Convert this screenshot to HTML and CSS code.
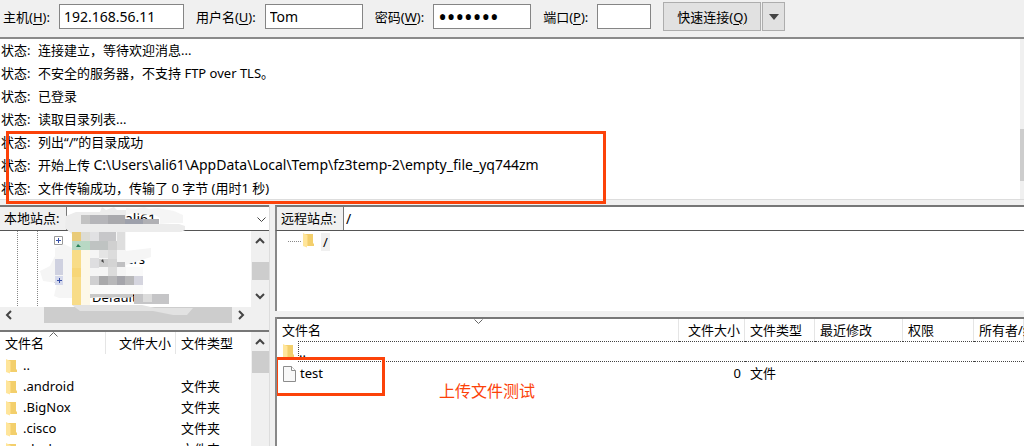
FILE: index.html
```
<!DOCTYPE html>
<html lang="zh-CN">
<head>
	<meta charset="utf-8">
	<title>FileZilla</title>
	<link rel="stylesheet" href="styles.css">
</head>
<body>

<!-- shared icons -->
<svg class="sprite" aria-hidden="true">
	<symbol id="folder" viewBox="0 0 11 15">
		<path d="M2 1h8v9l1 1v2H2z" fill="#f3cf6c"/>
		<path d="M0 0l4 2v12.500L0 13z" fill="#ffe59a"/>
		<path d="M4 2h1v11H4z" fill="#fbd980"/>
	</symbol>
	<symbol id="file" viewBox="0 0 13 16">
		<path d="M.5.5h8l4 4v11H.5z" fill="#f8f8f8" stroke="#8c8c8c"/>
		<path d="M8.500.5v4h4" fill="#fff" stroke="#8c8c8c"/>
	</symbol>
	<symbol id="up" viewBox="0 0 10 7"><path d="M1 6l4-4 4 4" fill="none" stroke="#444" stroke-width="2"/></symbol>
	<symbol id="down" viewBox="0 0 10 7"><path d="M1 1l4 4 4-4" fill="none" stroke="#444" stroke-width="2"/></symbol>
	<symbol id="left" viewBox="0 0 7 10"><path d="M6 1L2 5l4 4" fill="none" stroke="#444" stroke-width="2"/></symbol>
	<symbol id="right" viewBox="0 0 7 10"><path d="M1 1l4 4-4 4" fill="none" stroke="#444" stroke-width="2"/></symbol>
	<symbol id="sort" viewBox="0 0 9 5"><path d="M.5 4.500l4-4 4 4" fill="none" stroke="#666"/></symbol>
	<symbol id="plus" viewBox="0 0 9 9">
		<path d="M.5.5h8v8h-8z" fill="#fff" stroke="#999"/>
		<path d="M2 4.500h5M4.500 2v5" stroke="#3850a8"/>
	</symbol>
</svg>

<div class="app">

	<!-- quick connect -->
	<form class="toolbar" action="#" onsubmit="return false" autocomplete="off">
		<label for="host">主机(<u>H</u>):</label>
		<input type="text" id="host" class="field field-host" value="192.168.56.11">
		<label for="user">用户名(<u>U</u>):</label>
		<input type="text" id="user" class="field field-user" value="Tom">
		<label for="pass">密码(<u>W</u>):</label>
		<input type="password" id="pass" class="field field-user field-pass" value="1234567">
		<label for="port">端口(<u>P</u>):</label>
		<input type="text" id="port" class="field field-port">
		<div class="connect">
			<button type="submit" class="btn btn-connect">快速连接(<u>Q</u>)</button>
			<button type="button" class="btn btn-drop" aria-label="历史记录"><svg width="10" height="6" viewBox="0 0 10 6"><path d="M0 0h10L5 6z" fill="#444"/></svg></button>
		</div>
	</form>

	<!-- message log -->
	<div class="log">
		<ul class="log-lines">
			<li><span>状态:</span>连接建立，等待欢迎消息...</li>
			<li><span>状态:</span>不安全的服务器，不支持 FTP over TLS。</li>
			<li><span>状态:</span>已登录</li>
			<li><span>状态:</span>读取目录列表...</li>
			<li><span>状态:</span>列出“/”的目录成功</li>
			<li><span>状态:</span><p>开始上传 <code>C:\Users\ali61\AppData\Local\Temp\fz3temp-2\empty_file_yq744zm</code></p></li>
			<li><span>状态:</span>文件传输成功，传输了 0 字节 (用时1 秒)</li>
		</ul>
		<div class="log-scroll"><div class="thumb"></div></div>
		<div class="mark mark-log"></div>
	</div>

	<div class="panes">

		<!-- local site -->
		<section class="local">
			<div class="site">
				<label for="local-path">本地站点:</label>
				<select id="local-path" class="path path-local"><option>ali61</option></select>
				<svg class="path-arrow" width="9" height="6" viewBox="0 0 9 6"><path d="M.5.5l4 4 4-4" fill="none" stroke="#444"/></svg>
			</div>
			<div class="tree-local">
				<div class="tree-view">
					<div class="guides"></div>
					<ul class="tree">
						<li><svg class="plus"><use href="#plus"/></svg><svg class="folder"><use href="#folder"/></svg>ali61</li>
						<li><svg class="plus"></svg><svg class="folder"><use href="#folder"/></svg>All Users</li>
						<li><svg class="plus"><use href="#plus"/></svg><svg class="folder"><use href="#folder"/></svg>Default</li>
						<li><svg class="plus"></svg><svg class="folder"><use href="#folder"/></svg>Default</li>
					</ul>
				</div>
				<div class="vscroll">
					<svg class="arrow"><use href="#up"/></svg>
					<div class="thumb thumb-tree"></div>
					<svg class="arrow"><use href="#down"/></svg>
				</div>
			</div>
			<div class="hscroll">
				<svg class="arrow-h"><use href="#left"/></svg>
				<div class="thumb"></div>
				<svg class="arrow-h"><use href="#right"/></svg>
			</div>

			<!-- censored names -->
			<svg class="censor" viewBox="0 205 270 110" aria-hidden="true">
				<path d="M66 216l10-4h24l2-5 4 3 8-3 3 3h9v14h53l6 2v4l-4 2h-61l-20 2H72l-7-6z" fill="#ececec"/>
				<path d="M126 208l10 1 8-2 5 2 9-1 16 3 9 4v8h-12l-11 1v-6l-5-3h-10l-10-2-9 2z" fill="#f1f1f1" opacity=".7"/>
				<path d="M81 215h9v9h-9z" fill="#c2c2c2"/>
				<path d="M90 215h18v9H90z" fill="#b5b5b9"/>
				<path d="M108 215h17v9h-17z" fill="#a9a9ad"/>
				<path d="M125 219h18v5h-18z" fill="#9da0ab"/>
				<path d="M143 219h16v5h-16z" fill="#b0b0b4"/>
				<path d="M55 248l9-4 8 4v-16h54v29l25-8v4l-25 8v33H59l-5-2 3-13-14-2-3-10 10-5 5-10z" fill="#f5f5f5"/>
				<path d="M117 252l34-4v6l-8 3-10 4-16 3z" fill="#f5f5f5"/>
				<path d="M72 232h9v17h-9z" fill="#e9cb79"/>
				<path d="M72 249h9v56h-9z" fill="#f8dc88"/>
				<path d="M72 268h9v9h-9z" fill="#f7d678"/>
				<path d="M81 232h9v9h-9z" fill="#dcdcd5"/>
				<path d="M72 241h18v9H72z" fill="#b8d8c4"/>
				<path d="M76 247l2-3 3 3z" fill="#278458"/>
				<path d="M81 250h9v55h-9z" fill="#fdf8e8"/>
				<path d="M90 232h9v9h-9z" fill="#e1e1e3"/>
				<path d="M99 232h17v9H99z" fill="#c7c7c9"/>
				<path d="M90 241h18v9H90z" fill="#bfc3c2"/>
				<path d="M108 241h9v9h-9z" fill="#d0d0d0"/>
				<path d="M117 232h8v18h-8z" fill="#dedede"/>
				<path d="M99 250h9v8h-9z" fill="#e4e4e4"/>
				<path d="M108 250h9v27h-9z" fill="#dcdcdc"/>
				<path d="M90 258h9v10h-9z" fill="#dedee0"/>
				<path d="M99 259h9v8h-9z" fill="#cecece"/>
				<path d="M108 259h9v8h-9z" fill="#d4d4d4"/>
				<path d="M117 262h8v5h-8z" fill="#c0c0c2"/>
				<path d="M101 261l2-2 1 4z" fill="#444"/>
				<path d="M55 259h8v16h-8z" fill="#cfd1e0"/>
				<path d="M55 276h8v9h-8z" fill="#d5d9ec"/>
				<path d="M57 280.500h5M59.500 278v5" stroke="#3850a8"/>
				<path d="M90 276h9v9h-9z" fill="#cfcfd1"/>
				<path d="M99 276h9v9h-9z" fill="#a9a9ab"/>
				<path d="M108 276h9v9h-9z" fill="#b7b7b9"/>
				<path d="M117 276h8v9h-8z" fill="#a5a5ab"/>
				<path d="M125 276h9v9h-9z" fill="#b8b8ba"/>
				<path d="M134 276h9v9h-9z" fill="#d5d5df"/>
				<path d="M126 267h17v9h-17zM90 285h53v9H90z" fill="#fafafa"/>
				<path d="M90 294h43v3l-8 1-9-1-6 1-12-1-8 1z" fill="#c8c8c8"/>
				<path d="M134 294h35v10h-35z" fill="#c5c5c7"/>
				<path d="M143 294h9v8h-9z" fill="#dcdcdc"/>
				<path d="M72 305h70l13 3h38l-6 7h-14l-20-4H80z" fill="#e2e2e2"/>
			</svg>

			<table class="files files-local">
				<thead>
					<tr>
						<th class="l-name">文件名<svg class="sort"><use href="#sort"/></svg></th>
						<th class="l-size">文件大小</th>
						<th>文件类型</th>
					</tr>
				</thead>
				<tbody>
					<tr><td><svg class="folder"><use href="#folder"/></svg>..</td><td></td><td></td></tr>
					<tr><td><svg class="folder"><use href="#folder"/></svg>.android</td><td></td><td>文件夹</td></tr>
					<tr><td><svg class="folder"><use href="#folder"/></svg>.BigNox</td><td></td><td>文件夹</td></tr>
					<tr><td><svg class="folder"><use href="#folder"/></svg>.cisco</td><td></td><td>文件夹</td></tr>
					<tr><td><svg class="folder"><use href="#folder"/></svg>.docker</td><td></td><td>文件夹</td></tr>
				</tbody>
			</table>
			<div class="vscroll list-scroll">
				<svg class="arrow"><use href="#up"/></svg>
				<div class="thumb thumb-list"></div>
			</div>
		</section>

		<!-- remote site -->
		<section class="remote">
			<div class="site">
				<label for="remote-path">远程站点:</label>
				<input type="text" id="remote-path" class="path" value="/">
			</div>
			<div class="tree-remote">
				<span class="dots"></span><svg class="folder"><use href="#folder"/></svg><span class="root">/</span>
			</div>
			<div class="list-remote">
				<table class="files files-remote">
					<thead>
						<tr>
							<th>文件名<svg class="sort sort-down"><use href="#sort"/></svg></th>
							<th class="r-size">文件大小</th>
							<th class="r-type">文件类型</th>
							<th class="r-date">最近修改</th>
							<th class="r-perm">权限</th>
							<th class="r-owner">所有者/组</th>
						</tr>
					</thead>
					<tbody>
						<tr class="focused"><td><div class="parent"><svg class="folder"><use href="#folder"/></svg><span>..</span></div></td><td></td><td></td><td></td><td></td><td></td></tr>
						<tr><td><svg class="file"><use href="#file"/></svg>test</td><td>0</td><td>文件</td><td></td><td></td><td></td></tr>
					</tbody>
				</table>
				<div class="mark mark-file"></div>
				<p class="note">上传文件测试</p>
			</div>
		</section>

	</div>
</div>

</body>
</html>
```
FILE: styles.css
```
* {
	margin: 0;
	padding: 0;
	box-sizing: border-box;
}

body {
	background-color: #f0f0f0;
	color: #000;
	font: 13px/20px "Noto Sans", "Noto Sans CJK SC", sans-serif;
	overflow: hidden;
}

ul {
	list-style: none;
}

svg {
	display: block;
}

input,
button,
select {
	font: inherit;
	color: inherit;
}

.sprite {
	position: absolute;
	width: 0;
	height: 0;
}

.app {
	display: flex;
	flex-direction: column;
	height: 100vh;
}

/* ---- quick connect ---- */
.toolbar {
	display: flex;
	align-items: center;
	height: 39px;
	padding: 0 3px 4px;
	border-bottom: 2px solid #8a8a8a;
	white-space: nowrap;
}

.toolbar u {
	text-underline-offset: 2px;
}

.toolbar label {
	flex: none;
}

.field {
	height: 25px;
	margin: 0 12px 0 9px;
	padding: 0 4px;
	border: 1px solid #858585;
	background-color: #fff;
	outline: none;
	font-size: 14px;
}

.field-host {
	width: 125px;
}

.field-user {
	width: 98px;
}

.field-pass {
	font-size: 23px;
}

.field-port {
	width: 54px;
}

.connect {
	display: flex;
	gap: 1px;
}

.btn {
	height: 29px;
	border: 1px solid #adadad;
	background-color: #e1e1e1;
}

.btn-connect {
	width: 98px;
}

.btn-drop {
	display: flex;
	align-items: center;
	justify-content: center;
	width: 23px;
}

/* ---- log ---- */
.log {
	position: relative;
	display: flex;
	justify-content: space-between;
	height: 161px;
	background-color: #fff;
	border-bottom: 1px solid #ddd;
}

.log-lines li {
	display: flex;
	height: 23px;
	padding-left: 1px;
	line-height: 22px;
	white-space: nowrap;
}

.log-lines span {
	width: 37px;
}

.log-lines code {
	font-family: inherit;
	font-size: 14px;
}

.thumb {
	background-color: #cdcdcd;
}

.log-scroll {
	width: 4px;
	padding-top: 90px;
	background-color: #f0f0f0;
}

.log-scroll .thumb {
	height: 52px;
}

/* red boxes over the interesting parts */
.mark {
	position: absolute;
	z-index: 2;
	border: 3px solid #fc4209;
}

.mark-log {
	left: 6px;
	top: 92px;
	width: 600px;
	height: 73px;
}

/* ---- panes ---- */
.panes {
	display: flex;
	flex: 1;
	gap: 5px;
	min-height: 0;
	padding-top: 5px;
}

.local {
	position: relative;
	display: grid;
	grid-template-columns: 1fr 18px;
	grid-template-rows: 26px 76px 16px 7px 1fr;
	width: 270px;
	border-right: 1px solid #ddd;
}

.remote {
	display: flex;
	flex-direction: column;
	flex: 1;
	min-width: 0;
}

.site {
	position: relative;
	display: flex;
	height: 26px;
	border-top: 2px solid #777;
	border-bottom: 1px solid #555;
	white-space: nowrap;
}

.local .site,
.tree-local,
.hscroll {
	grid-column: 1 / 3;
}

.site label {
	width: 66px;
	padding-left: 4px;
	line-height: 22px;
}

.path {
	flex: 1;
	min-width: 0;
	border: 0;
	border-left: 1px solid #777;
	background-color: #fff;
	outline: none;
	padding-left: 2px;
	font-size: 14px;
}

.path-local {
	appearance: none;
	padding-left: 58px;
}

.path-arrow {
	position: absolute;
	right: 3px;
	top: 10px;
}

.tree-local {
	display: flex;
	background-color: #fff;
}

.tree-view {
	display: flex;
	flex: 1;
}

.guides {
	width: 54px;
	background: repeating-linear-gradient(transparent 0 1px, #fff 1px 2px), linear-gradient(90deg, transparent 17px, #888 17px 18px, transparent 18px 37px, #888 37px 38px, transparent 38px);
}

.tree li {
	display: flex;
	align-items: center;
	height: 19px;
	line-height: 19px;
	white-space: nowrap;
}

.plus {
	width: 9px;
	height: 9px;
	margin-right: 9px;
}

.folder {
	flex: none;
	width: 11px;
	height: 15px;
}

.tree .folder {
	margin-right: 9px;
}

.vscroll {
	display: flex;
	flex-direction: column;
	align-items: center;
	width: 18px;
	padding: 6px 0;
	background-color: #f0f0f0;
}

.arrow {
	width: 10px;
	height: 7px;
}

.vscroll .thumb {
	width: 17px;
}

.thumb-tree {
	height: 18px;
	margin: 18px 0 13px;
}

.thumb-list {
	height: 22px;
	margin-top: 6px;
}

.tree-view + .vscroll {
	margin-left: auto;
}

.hscroll {
	display: flex;
	align-items: center;
	padding: 0 24px 0 5px;
	background-color: #f0f0f0;
}

.hscroll .thumb {
	flex: 1;
	height: 16px;
	margin: 0 6px 0 32px;
}

.arrow-h {
	width: 7px;
	height: 10px;
}

.censor {
	position: absolute;
	left: 0;
	top: 0;
	width: 270px;
	height: 110px;
	pointer-events: none;
}

/* ---- file lists ---- */
.files {
	width: 100%;
	table-layout: fixed;
	border-spacing: 0;
	border-top: 2px solid #777;
	background-color: #fff;
}

.files th {
	position: relative;
	height: 22px;
	padding: 0 5px;
	border-right: 1px solid #e5e5e5;
	font-weight: normal;
	text-align: left;
	white-space: nowrap;
}

.files td {
	height: 21px;
	padding: 0 5px;
	line-height: 20px;
	white-space: nowrap;
}

.files td:first-child {
	padding: 0 0 0 6px;
}

.files td:nth-child(2),
.files th:nth-child(2) {
	padding-right: 4px;
	text-align: right;
}

.files td .folder {
	display: inline-block;
	margin-right: 6px;
	vertical-align: middle;
}

.files .file {
	display: inline-block;
	width: 13px;
	height: 16px;
	margin-right: 4px;
	vertical-align: middle;
}

.sort {
	position: absolute;
	left: 50%;
	top: 0;
	width: 9px;
	height: 5px;
	margin-left: -4px;
}

.sort-down {
	transform: rotate(180deg);
}

.files-local {
	grid-row: 5;
	align-self: start;
}

.files-local th:last-child {
	border-right: 0;
}

.l-name {
	width: 106px;
}

.l-size {
	width: 70px;
}

.list-scroll {
	grid-row: 5;
	border-top: 2px solid #777;
}

.tree-remote {
	display: flex;
	align-items: flex-start;
	height: 80px;
	padding: 2px 0 0 11px;
	border-left: 2px solid #888;
	background-color: #fff;
}

.dots {
	width: 13px;
	margin: 8px 2px 0 0;
	border-top: 1px dotted #888;
}

.tree-remote .folder {
	margin-right: 7px;
}

.root {
	width: 9px;
	height: 18px;
	padding-left: 2px;
	line-height: 18px;
	background-color: #f0f0f0;
}

.remote .site {
	border-left: 2px solid #888;
}

.list-remote {
	position: relative;
	flex: 1;
	margin-top: 6px;
	border-left: 2px solid #888;
	background-color: #fff;
	overflow-x: clip;
}

/* focus rectangle starts right of the folder icon */
.parent {
	display: flex;
	align-items: center;
}

.files .parent .folder {
	margin-right: 4px;
}

.parent span {
	flex: 1;
	height: 21px;
	border: 1px dotted #444;
	border-right: 0;
}

.focused td + td {
	border-top: 1px dotted #444;
	border-bottom: 1px dotted #444;
}

.r-size {
	width: 66px;
}

.r-type {
	width: 70px;
}

.r-date {
	width: 88px;
}

.r-perm {
	width: 71px;
}

.r-owner {
	width: 50px;
}

.mark-file {
	left: -2px;
	top: 40px;
	width: 110px;
	height: 39px;
}

.note {
	position: absolute;
	left: 162px;
	top: 64px;
	color: #fc4209;
	font-size: 16px;
}
```
